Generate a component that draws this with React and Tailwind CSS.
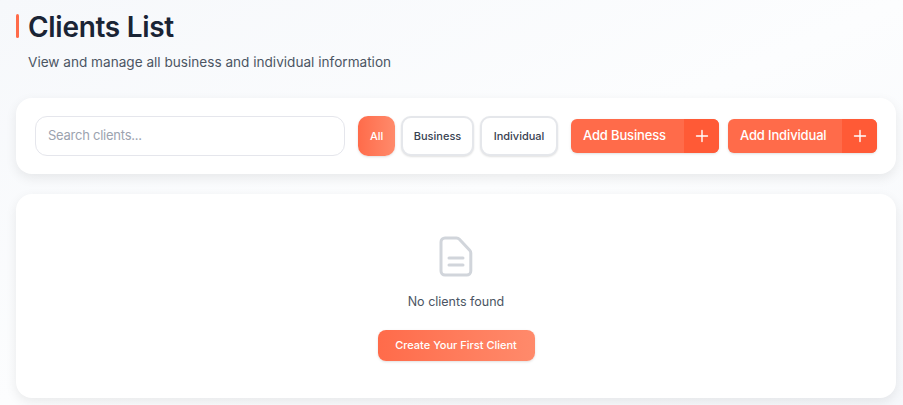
const font = { fontFamily: '"Inter", "Noto Sans", sans-serif' };

function PlusButton({ label, width }) {
  return (
    <button className={`flex h-[34px] ${width} overflow-hidden rounded-md bg-[#ff6b4a] text-white shadow-sm`}>
      <span className="flex flex-1 items-center pl-[12px] text-[13px] font-medium tracking-[-0.15px]">{label}</span>
      <span className="flex w-[35px] items-center justify-center bg-[#ff5a36]">
        <svg width="14" height="14" viewBox="0 0 14 14" fill="none" stroke="white" strokeWidth="1.4" strokeLinecap="round">
          <path d="M7 1.5v11M1.5 7h11" />
        </svg>
      </span>
    </button>
  );
}

function FilterButton({ label, width }) {
  return (
    <button className={`h-10 ${width} rounded-[10px] border-2 border-[#e5e7eb] bg-white pt-px text-[11px] font-medium text-[#374151] shadow-[0_1px_2px_rgba(0,0,0,0.12)]`}>
      {label}
    </button>
  );
}

export default function App() {
  return (
    <div style={font} className="h-[405px] overflow-hidden bg-gradient-to-br from-[#f6f8fb] via-[#fcfdfe] to-[#f6f8fb] pl-4 pr-[7px] pt-[14px]">
      <div className="flex h-6 items-center">
        <div className="mr-[9px] h-6 w-[3px] rounded-full bg-[#ff6b4a]" />
        <h1 className="pt-[2px] text-[28px] font-semibold leading-6 tracking-[-0.3px] text-[#1a2435]">Clients List</h1>
      </div>
      <p className="ml-3 mt-[14px] text-[13.6px] leading-[20px] text-[#4b5563]">View and manage all business and individual information</p>

      <div className="mt-[26px] flex h-[76px] items-center rounded-2xl bg-white pl-[19px] pr-[19px] shadow-[0_4px_12px_rgba(0,0,0,0.08)]">
        <div className="flex h-10 w-[311px] items-center rounded-xl border-[1.5px] border-[#e5e6ec] bg-white pl-[12px] text-[13px] tracking-[-0.25px] text-[#9ca3af]">
          Search clients...
        </div>
        <button className="ml-[13px] h-10 w-[37px] rounded-[10px] bg-gradient-to-r from-[#ff6b4a] to-[#ff8a6b] pt-px text-[11px] font-medium text-white shadow-sm">
          All
        </button>
        <div className="ml-[6px] flex gap-[6px]">
          <FilterButton label="Business" width="w-[73px]" />
          <FilterButton label="Individual" width="w-[78px]" />
        </div>
        <div className="ml-[13px] flex gap-[9px]">
          <PlusButton label="Add Business" width="w-[148px]" />
          <PlusButton label="Add Individual" width="w-[149px]" />
        </div>
      </div>

      <div className="mt-5 flex h-[204px] flex-col items-center rounded-2xl bg-white pt-[38px] shadow-[0_4px_12px_rgba(0,0,0,0.08)]">
        <svg width="48" height="48" viewBox="0 0 48 48" fill="none" stroke="#d1d5db" strokeWidth="3" strokeLinecap="round" strokeLinejoin="round">
          <path d="M13 6h11.5a4 4 0 0 1 2.9 1.3l10.3 11a4 4 0 0 1 1.1 2.7V39a4 4 0 0 1-4 4H13a4 4 0 0 1-4-4V10a4 4 0 0 1 4-4z" />
          <path d="M17 26h14M17 33h14" />
        </svg>
        <p className="mt-[12px] text-[12.5px] leading-5 text-[#4b5563]">No clients found</p>
        <button className="mt-[18px] h-[31px] w-[157px] rounded-lg bg-gradient-to-r from-[#ff6b4a] to-[#ff8a6b] text-[11px] font-medium text-white shadow-sm">
          Create Your First Client
        </button>
      </div>
    </div>
  );
}
